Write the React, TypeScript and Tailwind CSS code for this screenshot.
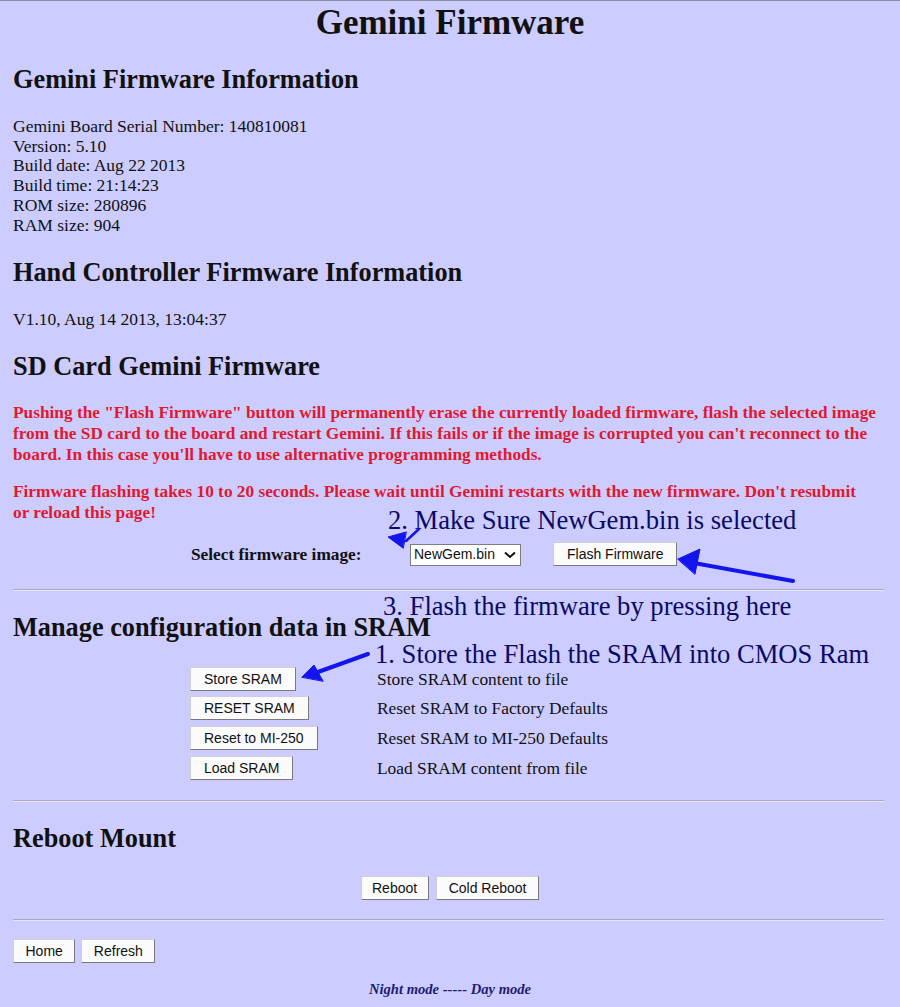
import React from 'react';

const serif = { fontFamily: '"Liberation Serif", "Times New Roman", serif' };

function Btn({ children, className = 'px-[13px]' }: { children: React.ReactNode; className?: string }) {
  return (
    <button
      className={`h-[24px] bg-[#fbfbfb] border border-[#cfcfcf] border-r-[#7a7a7a] border-b-[#7a7a7a] text-[14px] leading-none text-[#111] font-['Liberation_Sans',Arial,sans-serif] ${className}`}
    >
      {children}
    </button>
  );
}

function Hr() {
  return <div className="w-[871px] h-[2px] bg-[#a9a9c4] border-b border-[#e6e6f5]" />;
}

const sramRows = [
  ['Store SRAM', 'Store SRAM content to file'],
  ['RESET SRAM', 'Reset SRAM to Factory Defaults'],
  ['Reset to MI-250', 'Reset SRAM to MI-250 Defaults'],
  ['Load SRAM', 'Load SRAM content from file'],
];

export default function App() {
  return (
    <div className="relative min-h-screen bg-[#ccccff] text-[#111] px-[13px] border-t border-[#8a8aa0]" style={serif}>
      <h1 className="text-[35px] font-bold text-center leading-[43px]">Gemini Firmware</h1>

      <h2 className="mt-[21px] text-[26.3px] font-bold leading-[30px]">Gemini Firmware Information</h2>
      <div className="mt-[22px] text-[17.5px] leading-[19.7px]">
        <div>Gemini Board Serial Number: 140810081</div>
        <div>Version: 5.10</div>
        <div>Build date: Aug 22 2013</div>
        <div>Build time: 21:14:23</div>
        <div>ROM size: 280896</div>
        <div>RAM size: 904</div>
      </div>

      <h2 className="mt-[22.6px] text-[26.3px] font-bold leading-[30px]">Hand Controller Firmware Information</h2>
      <div className="mt-[22px] text-[17.5px] leading-[19.7px]">V1.10, Aug 14 2013, 13:04:37</div>

      <h2 className="mt-[22.3px] text-[26.3px] font-bold leading-[30px]">SD Card Gemini Firmware</h2>
      <p className="mt-[20.5px] w-[874px] text-[17.3px] font-bold leading-[21px] text-[#e0192f]">
        Pushing the "Flash Firmware" button will permanently erase the currently loaded firmware, flash the selected image from the SD card to the board and restart Gemini. If this fails or if the image is corrupted you can't reconnect to the board. In this case you'll have to use alternative programming methods.
      </p>
      <p className="mt-[16px] w-[860px] text-[17.3px] font-bold leading-[21px] text-[#e0192f]">
        Firmware flashing takes 10 to 20 seconds. Please wait until Gemini restarts with the new firmware. Don't resubmit or reload this page!
      </p>

      <div className="mt-[18.5px] h-[26px] flex items-center pl-[178px]">
        <span className="w-[219px] text-[17.3px] font-bold">Select firmware image:</span>
        <div className="w-[111px] h-[22px] bg-white border border-[#7d7d7d] flex items-center justify-between pl-[3px] pr-[4px] text-[14px] text-[#111] font-['Liberation_Sans',Arial,sans-serif]">
          <span>NewGem.bin</span>
          <svg width="12" height="8" viewBox="0 0 12 8" fill="none" stroke="#111" strokeWidth="2">
            <path d="M1 1.5 L6 6 L11 1.5" />
          </svg>
        </div>
        <div className="ml-[32px] h-[25px] flex">
          <Btn>Flash Firmware</Btn>
        </div>
      </div>

      <div className="mt-[21px]">
        <Hr />
      </div>

      <h2 className="mt-[22px] text-[26.3px] font-bold leading-[30px]">Manage configuration data in SRAM</h2>
      <div className="mt-[21px] pl-[177px]">
        {sramRows.map(([label, desc]) => (
          <div key={label} className="h-[29.7px] flex items-center">
            <div className="w-[187px]">
              <Btn>{label}</Btn>
            </div>
            <span className="text-[17.4px]">{desc}</span>
          </div>
        ))}
      </div>

      <div className="mt-[17px]">
        <Hr />
      </div>

      <h2 className="mt-[22px] text-[26.3px] font-bold leading-[30px]">Reboot Mount</h2>
      <div className="mt-[22.5px] flex justify-center gap-[7px]">
        <Btn className="px-[10.5px]">Reboot</Btn>
        <Btn className="px-[12px]">Cold Reboot</Btn>
      </div>

      <div className="mt-[19px]">
        <Hr />
      </div>

      <div className="mt-[17.5px] flex gap-[6px]">
        <Btn className="px-[11.5px]">Home</Btn>
        <Btn className="px-[11.5px]">Refresh</Btn>
      </div>

      <div className="mt-[16.5px] pb-[6px] text-center text-[14.6px] leading-[20px] font-bold italic text-[#1c1c6e]">
        Night mode ----- Day mode
      </div>

      {/* hand-drawn annotations laid over the page */}
      <div className="absolute left-[388px] top-[504px] text-[26.6px] leading-[30px] text-[#0a0a66] whitespace-nowrap">
        2. Make Sure NewGem.bin is selected
      </div>
      <div className="absolute left-[383px] top-[590px] text-[26.6px] leading-[30px] text-[#0a0a66] whitespace-nowrap">
        3. Flash the firmware by pressing here
      </div>
      <div className="absolute left-[375px] top-[638px] text-[26.6px] leading-[30px] text-[#0a0a66] whitespace-nowrap">
        1. Store the Flash the SRAM into CMOS Ram
      </div>
      <svg className="absolute left-0 top-0 pointer-events-none" width="900" height="1007">
        <g fill="#1414ee" stroke="#1414ee" strokeLinecap="round">
          <line x1="419" y1="528" x2="406" y2="540" strokeWidth="2.5" />
          <polygon points="403,547 388,536 406,531" strokeWidth="1" />
          <line x1="793" y1="580" x2="694" y2="562" strokeWidth="4" />
          <polygon points="678,558 700,548 695,573" strokeWidth="1" />
          <line x1="368" y1="653" x2="318" y2="671" strokeWidth="4" />
          <polygon points="302,676 314,664 323,680" strokeWidth="1" />
        </g>
      </svg>
    </div>
  );
}
